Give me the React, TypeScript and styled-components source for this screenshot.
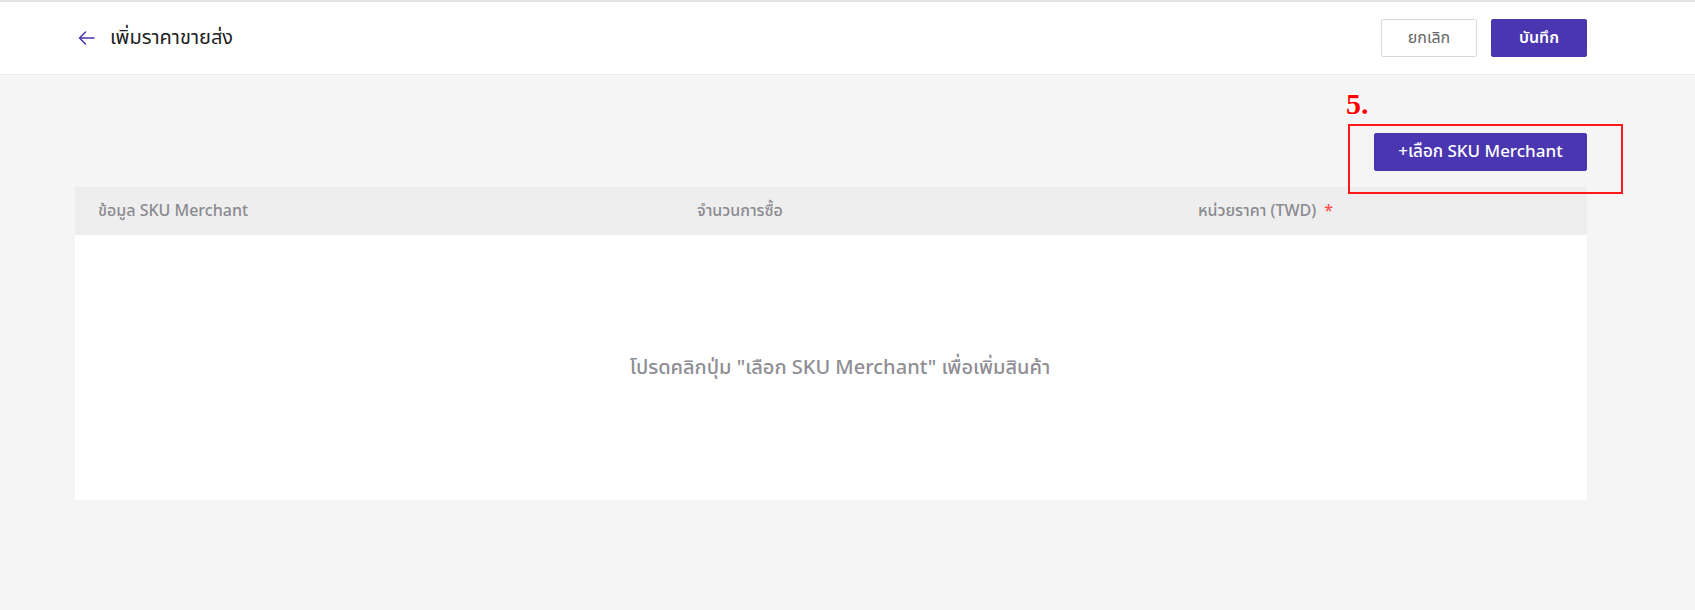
import React from "react";
import styled, { createGlobalStyle } from "styled-components";

const PURPLE = "#4a36b1";

const GlobalStyle = createGlobalStyle`
  html, body {
    margin: 0;
    padding: 0;
    background: #f5f5f5;
  }
  body {
    font-family: "Noto Sans Thai", "Noto Sans", "Liberation Sans", sans-serif;
  }
  * {
    box-sizing: border-box;
  }
`;

const Page = styled.div`
  min-height: 610px;
  background: #f5f5f5;
`;

const TopBar = styled.header`
  height: 75px;
  background: #ffffff;
  border-top: 2px solid #e2e2e2;
  border-bottom: 1px solid #ebebeb;
  display: flex;
  align-items: center;
  justify-content: space-between;
  padding: 0 108px 0 78px;
`;

const TitleGroup = styled.div`
  display: flex;
  align-items: center;
  gap: 15px;
`;

const BackButton = styled.button`
  border: 0;
  background: none;
  padding: 0;
  display: flex;
  align-items: center;
  cursor: pointer;
`;

const Title = styled.h1`
  margin: 0;
  font-size: 20px;
  font-weight: 400;
  color: #222222;
`;

const Actions = styled.div`
  display: flex;
  gap: 14px;
`;

const Button = styled.button<{ $primary?: boolean }>`
  height: 38px;
  min-width: 96px;
  padding: 0 20px;
  border-radius: 2px;
  font-family: inherit;
  font-size: 16px;
  font-weight: ${(p) => (p.$primary ? 600 : 400)};
  color: ${(p) => (p.$primary ? "#ffffff" : "#666666")};
  background: ${(p) => (p.$primary ? PURPLE : "#ffffff")};
  border: 1px solid ${(p) => (p.$primary ? PURPLE : "#d9d9d9")};
  cursor: pointer;
`;

const Main = styled.main`
  padding: 58px 108px 0 75px;
`;

const Toolbar = styled.div`
  display: flex;
  justify-content: flex-end;
  margin-bottom: 16px;
`;

const Marked = styled.div`
  position: relative;
`;

const AddButton = styled(Button)`
  width: 213px;
  font-size: 17px;
  font-weight: 500;
`;

const Highlight = styled.div`
  position: absolute;
  left: -26px;
  right: -36px;
  top: -9px;
  bottom: -23px;
  border: 2px solid #ff1a1a;
  pointer-events: none;
`;

const StepLabel = styled.span`
  position: absolute;
  left: -28px;
  top: -44px;
  font-family: "Liberation Serif", serif;
  font-weight: 700;
  font-size: 30px;
  line-height: 1;
  color: #ff0000;
  text-shadow: 1px 1px 0 #fff, -1px -1px 0 #fff, 1px -1px 0 #fff, -1px 1px 0 #fff;
`;

const Table = styled.section`
  background: #ffffff;
`;

const HeadRow = styled.div`
  display: grid;
  grid-template-columns: 599px 501px 1fr;
  height: 48px;
  align-items: center;
  background: #eeeeee;
`;

const HeadCell = styled.div`
  padding-left: 23px;
  font-size: 16px;
  font-weight: 500;
  color: #8a8a90;
`;

const Required = styled.span`
  color: #ff4d4f;
  margin-left: 8px;
`;

const Empty = styled.div`
  height: 265px;
  display: flex;
  align-items: center;
  justify-content: center;
  font-size: 20px;
  font-weight: 500;
  color: #8e8e94;
  padding-left: 18px;
`;

const ArrowLeft = () => (
  <svg width="17" height="14" viewBox="0 0 17 14" fill="none">
    <path d="M16 7H1.5M7.5 1L1.5 7l6 6" stroke={PURPLE} strokeWidth="1.5" strokeLinecap="round" strokeLinejoin="round" />
  </svg>
);

export default function App() {
  return (
    <>
      <GlobalStyle />
      <Page>
        <TopBar>
          <TitleGroup>
            <BackButton aria-label="back">
              <ArrowLeft />
            </BackButton>
            <Title>เพิ่มราคาขายส่ง</Title>
          </TitleGroup>
          <Actions>
            <Button>ยกเลิก</Button>
            <Button $primary>บันทึก</Button>
          </Actions>
        </TopBar>

        <Main>
          <Toolbar>
            <Marked>
              <StepLabel>5.</StepLabel>
              <AddButton $primary>+เลือก SKU Merchant</AddButton>
              <Highlight />
            </Marked>
          </Toolbar>

          <Table>
            <HeadRow>
              <HeadCell>ข้อมูล SKU Merchant</HeadCell>
              <HeadCell>จำนวนการซื้อ</HeadCell>
              <HeadCell>
                หน่วยราคา (TWD)
                <Required>*</Required>
              </HeadCell>
            </HeadRow>
            <Empty>โปรดคลิกปุ่ม "เลือก SKU Merchant" เพื่อเพิ่มสินค้า</Empty>
          </Table>
        </Main>
      </Page>
    </>
  );
}
